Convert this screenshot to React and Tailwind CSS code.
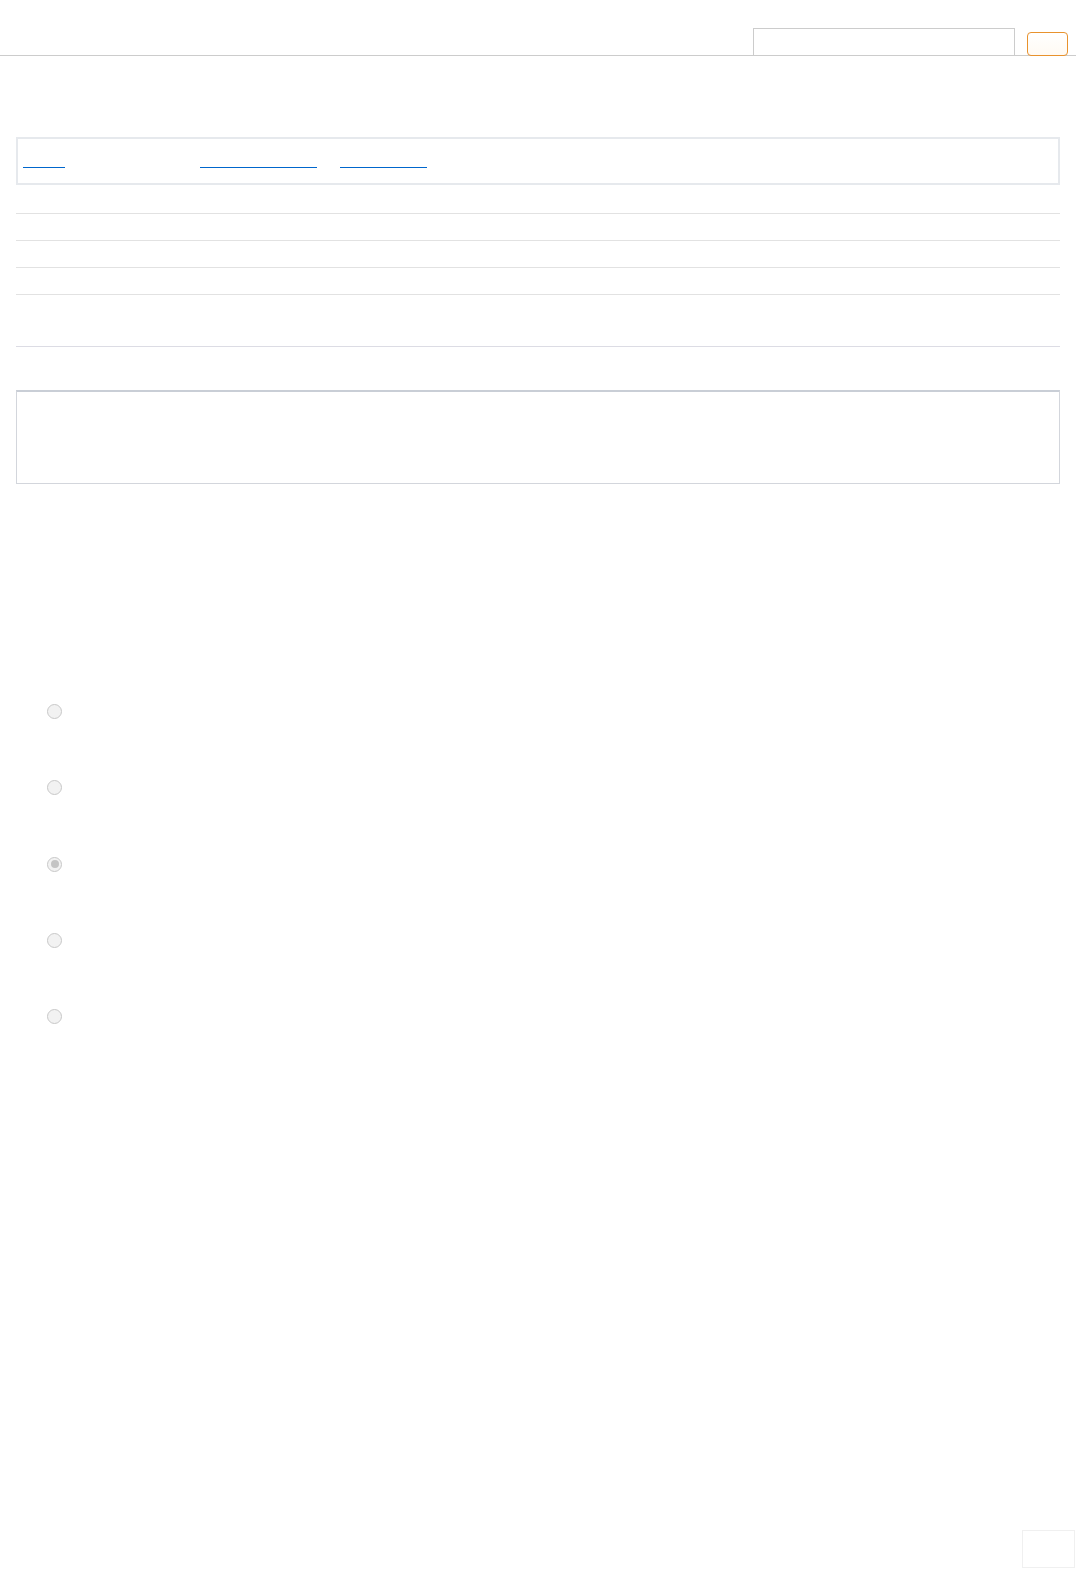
import React from 'react';

function Radio({ checked }) {
    return (
        <div className="h-[76.25px] flex items-start pl-[47px]">
            <span className="w-[15px] h-[15px] rounded-full border border-[#c8c8c8] bg-[#f2f2f2] flex items-center justify-center">
                {checked && <span className="w-[8px] h-[8px] rounded-full bg-[#c4c4c4]"></span>}
            </span>
        </div>
    );
}

export default function App() {
    return (
        <div className="min-h-[1570px] bg-white font-['Liberation_Sans',Arial,sans-serif] text-sm">
            {/* Top bar */}
            <header className="h-[56px] border-b border-[#cccccc] flex items-end justify-end pr-[8px]">
                <input
                    type="text"
                    className="w-[262px] h-[27px] border border-b-0 border-[#cccccc] bg-white outline-none"
                />
                <button className="ml-[12px] mb-[-1px] w-[41px] h-[24px] rounded-[4px] border border-[#e8922d] bg-gradient-to-b from-white to-[#fffaf3]"></button>
            </header>

            <main className="ml-[16px] w-[1044px]">
                {/* Links bar */}
                <nav className="mt-[81px] h-[48px] border-2 border-[#e6e9ed] flex items-end pb-[15px] pl-[5px]">
                    <a href="#" className="block w-[42px] border-b border-[#0066cc]"></a>
                    <a href="#" className="block ml-[135px] w-[117px] border-b border-[#0066cc]"></a>
                    <a href="#" className="block ml-[23px] w-[87px] border-b border-[#0066cc]"></a>
                </nav>

                {/* Rows */}
                <div className="mt-[28px] border-t border-[#e2e2e2]">
                    <div className="h-[27px] border-b border-[#e2e2e2]"></div>
                    <div className="h-[27px] border-b border-[#e2e2e2]"></div>
                    <div className="h-[27px] border-b border-[#e2e2e2]"></div>
                    <div className="h-[52px] border-b border-[#dcdce4]"></div>
                </div>

                {/* Panel */}
                <section className="mt-[43px] h-[94px] border border-t-2 border-[#d3d6dc] border-t-[#c9ced6]"></section>
            </main>

            {/* Options */}
            <div className="mt-[220px] flex flex-col">
                <Radio />
                <Radio />
                <Radio checked />
                <Radio />
                <Radio />
            </div>

            <button className="fixed bottom-[2px] right-[1px] w-[53px] h-[38px] border border-[#f0f0f0] bg-white"></button>
        </div>
    );
}
